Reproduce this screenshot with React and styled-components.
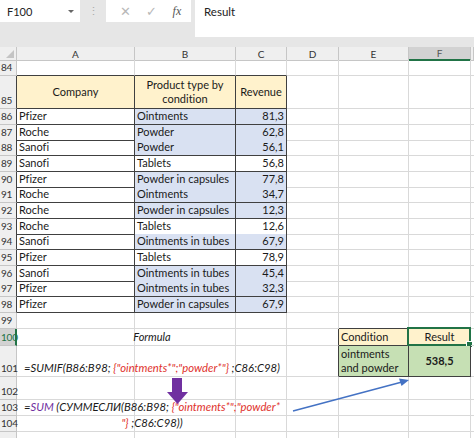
import React from 'react';
import styled, { createGlobalStyle } from 'styled-components';

const GlobalStyle = createGlobalStyle`
  html, body { margin: 0; padding: 0; background: #fff; }
  body {
    width: 474px;
    height: 438px;
    overflow: hidden;
    font-family: Lato, "Open Sans", sans-serif;
    font-variant-ligatures: none;
  }
`;

const COLS = '17px 118px 101px 51px 52px 70px 62px 1fr';
const DARK = '#404040';
const LIGHT = '#d9d9d9';
const HEAD_LINE = '#c6c6c6';
const EXCEL_GREEN = '#217346';

const Page = styled.div`
  width: 474px;
  height: 438px;
  overflow: hidden;
  position: relative;
  background: #fff;
`;

const Toolbar = styled.div`
  height: 47px;
  background: #e6e6e6;
  display: flex;
  align-items: flex-start;
`;

const NameBox = styled.div`
  width: 80px;
  height: 22px;
  background: #fff;
  display: flex;
  align-items: center;
  justify-content: space-between;
  padding: 0 6px 0 7px;
  box-sizing: border-box;
  font-size: 11px;
  color: #222;
`;

const Caret = styled.span`
  width: 0;
  height: 0;
  border-left: 3px solid transparent;
  border-right: 3px solid transparent;
  border-top: 3px solid #666;
`;

const Grip = styled.div`
  width: 26px;
  height: 22px;
  display: flex;
  align-items: center;
  justify-content: center;
  color: #aaa;
  font-size: 11px;
`;

const Buttons = styled.div`
  width: 85px;
  height: 22px;
  background: #fff;
  display: flex;
  align-items: center;
  justify-content: space-around;
  padding: 0 2px 0 6px;
  box-sizing: border-box;
`;

const ToolIcon = styled.span`
  color: ${p => p.$dark ? '#555' : '#b8b8b8'};
  font-size: ${p => p.$size || 12}px;
  font-family: ${p => p.$serif ? '"Liberation Serif", serif' : 'Lato, sans-serif'};
  font-style: ${p => p.$serif ? 'italic' : 'normal'};
`;

const FormulaInput = styled.div`
  flex: 1;
  height: 37px;
  margin-left: 4px;
  background: #fff;
  padding: 5px 9px;
  box-sizing: border-box;
  font-size: 11.5px;
  color: #222;
`;

const Sheet = styled.div`
  display: flex;
  flex-direction: column;
`;

const Row = styled.div`
  display: grid;
  grid-template-columns: ${COLS};
  height: ${p => p.$h}px;
  flex-shrink: 0;
`;

const Cell = styled.div`
  position: relative;
  box-sizing: border-box;
  border-right: 1px solid ${p => p.$r || LIGHT};
  border-bottom: 1px solid ${p => p.$b || LIGHT};
  background: ${p => p.$bg || 'transparent'};
  display: flex;
  align-items: ${p => p.$v === 'middle' ? 'center' : 'flex-end'};
  justify-content: ${p => p.$align === 'right' ? 'flex-end' : p.$align === 'center' ? 'center' : 'flex-start'};
  text-align: ${p => p.$align || 'left'};
  padding: 0 2px 1px 2px;
  font-size: 11px;
  line-height: 14px;
  font-weight: ${p => p.$bold ? 700 : 400};
  color: #1a1a1a;
  white-space: ${p => p.$wrap ? 'normal' : 'nowrap'};
  overflow: visible;
`;

const Selected = styled.div`
  position: absolute;
  left: -2px;
  top: -2px;
  right: -1px;
  bottom: -1px;
  border: 2px solid ${EXCEL_GREEN};
  pointer-events: none;

  &::after {
    content: '';
    position: absolute;
    right: -4px;
    bottom: -4px;
    width: 5px;
    height: 5px;
    background: ${EXCEL_GREEN};
    border: 1px solid #fff;
  }
`;

const ColHead = styled.div`
  box-sizing: border-box;
  background: ${p => p.$active ? '#d2d2d2' : '#efefef'};
  border-right: 1px solid ${HEAD_LINE};
  border-bottom: ${p => p.$active ? `2px solid ${EXCEL_GREEN}` : `1px solid ${HEAD_LINE}`};
  display: flex;
  align-items: center;
  justify-content: center;
  font-size: 10px;
  color: ${p => p.$active ? '#555' : '#333'};
  position: relative;
`;

const Corner = styled(ColHead)`
  &::after {
    content: '';
    position: absolute;
    right: 2px;
    bottom: 2px;
    width: 0;
    height: 0;
    border-left: 8px solid transparent;
    border-bottom: 8px solid #c4c4c4;
  }
`;

const RowHead = styled.div`
  box-sizing: border-box;
  background: ${p => p.$active ? '#d2d2d2' : '#efefef'};
  border-right: ${p => p.$active ? `2px solid ${EXCEL_GREEN}` : `1px solid ${p.$r || HEAD_LINE}`};
  border-bottom: 1px solid ${HEAD_LINE};
  display: flex;
  align-items: flex-end;
  padding: 0 0 1px 1px;
  font-size: 10px;
  line-height: 13px;
  color: ${p => p.$active ? EXCEL_GREEN : '#333'};
  letter-spacing: -0.2px;
`;

const Spill = styled.div`
  flex-shrink: 0;
  width: 266px;
  text-align: center;
  font-style: italic;
  font-size: ${p => p.$size || 11.3}px;
  position: relative;
  z-index: 2;
`;

const Red = styled.span`
  color: #e0322d;
`;

const Purple = styled.span`
  color: #7030a0;
`;

const Overlay = styled.svg`
  position: absolute;
  left: 0;
  top: 0;
  pointer-events: none;
  z-index: 3;
`;

const YELLOW = '#fff2cc';
const BLUE = '#d9e1f2';
const GREEN = '#c6e0b4';

const data = [
  ['Pfizer', 'Ointments', '81,3'],
  ['Roche', 'Powder', '62,8'],
  ['Sanofi', 'Powder', '56,1'],
  ['Sanofi', 'Tablets', '56,8'],
  ['Pfizer', 'Powder in capsules', '77,8'],
  ['Roche', 'Ointments', '34,7'],
  ['Roche', 'Powder in capsules', '12,3'],
  ['Roche', 'Tablets', '12,6'],
  ['Sanofi', 'Ointments in tubes', '67,9'],
  ['Pfizer', 'Tablets', '78,9'],
  ['Sanofi', 'Ointments in tubes', '45,4'],
  ['Pfizer', 'Ointments in tubes', '32,3'],
  ['Pfizer', 'Powder in capsules', '67,9'],
];

const dataHeights = [16, 15, 16, 16, 15, 16, 16, 15, 16, 16, 15, 16, 16];

const Blank = ({ n = 1, r, b }) =>
  Array.from({ length: n }, (_, i) => <Cell key={i} $r={r} $b={b} />);

const App = () => (
  <Page>
    <GlobalStyle />
    <Toolbar>
      <NameBox>F100<Caret /></NameBox>
      <Grip>⋮</Grip>
      <Buttons>
        <ToolIcon $size={13}>✕</ToolIcon>
        <ToolIcon $size={13}>✓</ToolIcon>
        <ToolIcon $dark $serif $size={12}>fx</ToolIcon>
      </Buttons>
      <FormulaInput>Result</FormulaInput>
    </Toolbar>

    <Sheet>
      <Row $h={13}>
        <Corner />
        {['A', 'B', 'C', 'D', 'E'].map(l => <ColHead key={l}>{l}</ColHead>)}
        <ColHead $active>F</ColHead>
        <ColHead />
      </Row>

      <Row $h={16}>
        <RowHead>84</RowHead>
        <Blank n={3} b={DARK} />
        <Blank n={4} />
      </Row>

      <Row $h={33}>
        <RowHead $r={DARK}>85</RowHead>
        <Cell $bg={YELLOW} $r={DARK} $b={DARK} $align="center" $v="middle">Company</Cell>
        <Cell $bg={YELLOW} $r={DARK} $b={DARK} $align="center" $v="middle" $wrap>
          Product type by condition
        </Cell>
        <Cell $bg={YELLOW} $r={DARK} $b={DARK} $align="center" $v="middle">Revenue</Cell>
        <Blank n={4} />
      </Row>

      {data.map(([company, type, revenue], i) => {
        const fill = type === 'Tablets' ? undefined : BLUE;
        return (
          <Row key={i} $h={dataHeights[i]}>
            <RowHead $r={DARK}>{86 + i}</RowHead>
            <Cell $r={DARK} $b={DARK}>{company}</Cell>
            <Cell $r={DARK} $b={DARK} $bg={fill}>{type}</Cell>
            <Cell $r={DARK} $b={DARK} $bg={fill} $align="right">{revenue}</Cell>
            <Blank n={4} />
          </Row>
        );
      })}

      <Row $h={16}>
        <RowHead>99</RowHead>
        <Blank n={4} />
        <Blank n={2} b={DARK} />
        <Blank />
      </Row>

      <Row $h={17}>
        <RowHead $active>100</RowHead>
        <Cell><Spill $size={11}>Formula</Spill></Cell>
        <Blank n={2} />
        <Blank r={DARK} />
        <Cell $bg={YELLOW} $r={DARK} $b={DARK}>Condition</Cell>
        <Cell $bg={YELLOW} $r={DARK} $b={DARK} $align="center">
          Result
          <Selected />
        </Cell>
        <Blank />
      </Row>

      <Row $h={31}>
        <RowHead>101</RowHead>
        <Cell>
          <Spill>
            =SUMIF(B86:B98; <Red>{'{"ointments*";"powder*"}'}</Red> ;C86:C98)
          </Spill>
        </Cell>
        <Blank n={2} />
        <Blank r={DARK} />
        <Cell $bg={GREEN} $r={DARK} $b={DARK} $wrap>ointments and powder</Cell>
        <Cell $bg={GREEN} $r={DARK} $b={DARK} $align="center" $v="middle" $bold>538,5</Cell>
        <Blank />
      </Row>

      <Row $h={23}>
        <RowHead>102</RowHead>
        <Blank n={7} />
      </Row>

      <Row $h={16}>
        <RowHead>103</RowHead>
        <Cell>
          <Spill>
            =<Purple>SUM</Purple> (СУММЕСЛИ(B86:B98; <Red>{'{"ointments*";"powder*'}</Red>
          </Spill>
        </Cell>
        <Blank n={6} />
      </Row>

      <Row $h={16}>
        <RowHead>104</RowHead>
        <Cell>
          <Spill><Red>{'"}'}</Red> ;C86:C98))</Spill>
        </Cell>
        <Blank n={6} />
      </Row>

      <Row $h={16}>
        <RowHead />
        <Blank n={7} />
      </Row>
    </Sheet>

    <Overlay width="474" height="438" viewBox="0 0 474 438">
      <rect x="172" y="378" width="10" height="15" fill="#7030a0" />
      <polygon points="167,392 188,392 177.5,404" fill="#7030a0" />
      <line x1="293" y1="411" x2="402" y2="382" stroke="#4472c4" strokeWidth="1.5" />
      <polygon points="409,380 399,378.5 401.5,386" fill="#4472c4" />
    </Overlay>
  </Page>
);

export default App;
